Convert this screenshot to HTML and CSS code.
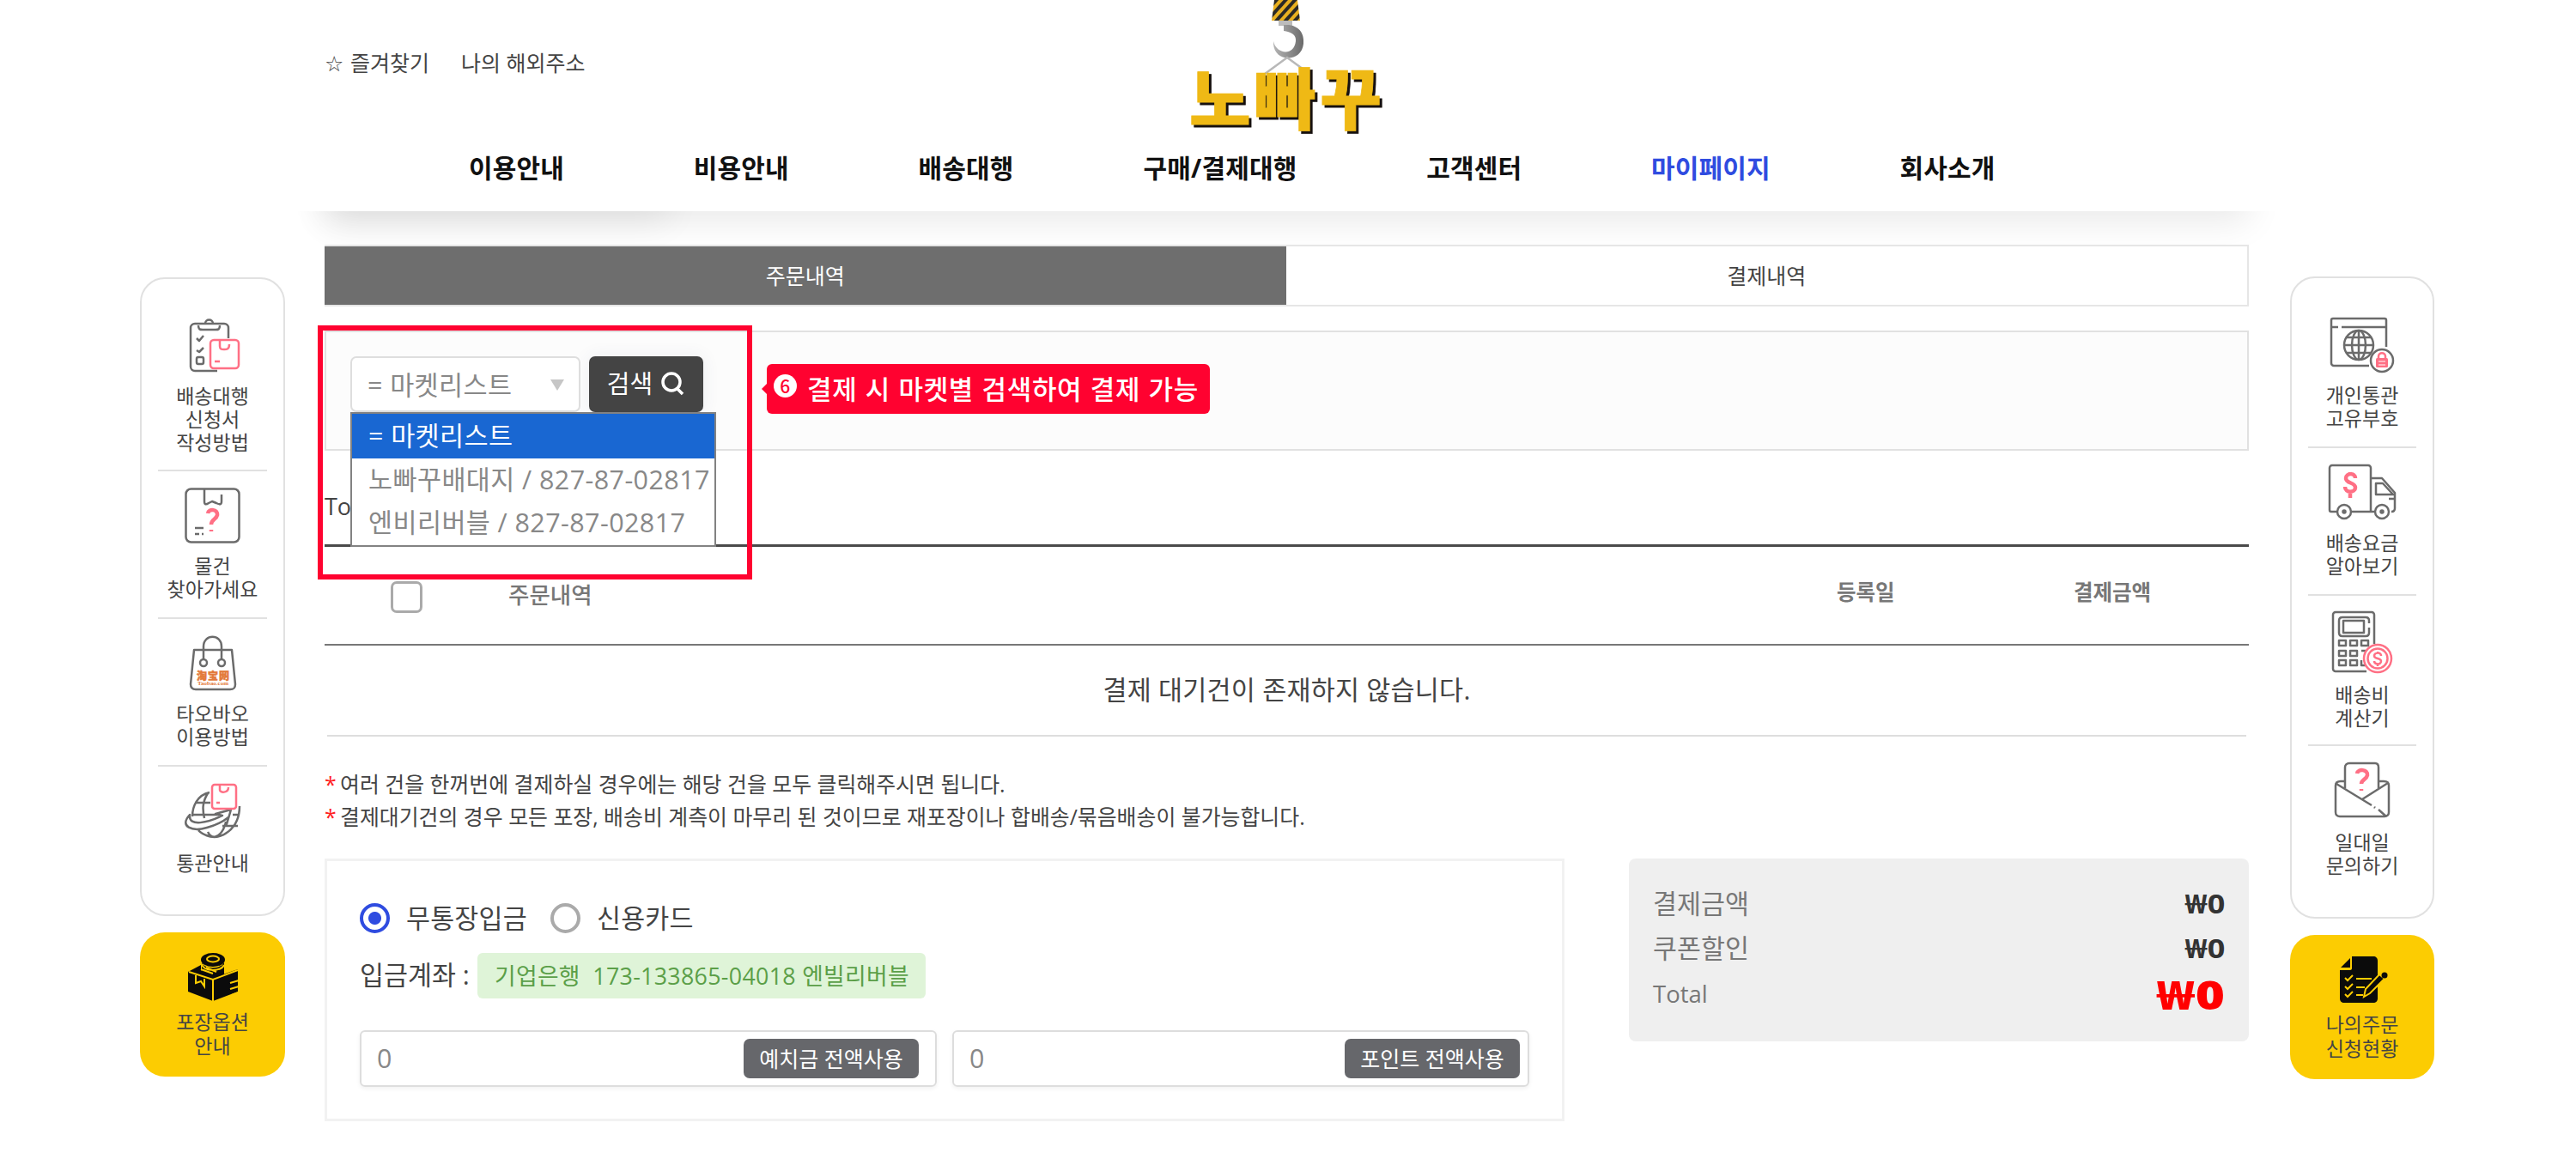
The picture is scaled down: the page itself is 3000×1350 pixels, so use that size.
FILE: index.html
```html
<!DOCTYPE html>
<html lang="ko">
<head>
<meta charset="utf-8">
<title>노빠꾸 - 주문내역</title>
<link rel="stylesheet" href="styles.css">
</head>
<body>
<div class="page">
  <aside class="side side-left">
    <nav class="side-panel">
      <a class="side-item first">
        <svg class="ico" width="76" height="66" viewBox="0 0 76 66"><path d="M43 62H17a5 5 0 0 1-5-5V12a5 5 0 0 1 5-5h34a5 5 0 0 1 5 5v12M29 7c0-6 9-6 9 0M21 9c0 5 2 5 5 5h15c3 0 5 0 5-5M19 24l3 3 5-6M19 38l3 2 5-5"/><rect x="19" y="46" width="8" height="8" rx="2"/><g class="pink"><rect x="35" y="26" width="33" height="33" rx="4"/><path d="M46 27v6c0 4 2 4 5 4s6 0 6-6M40 51h6"/></g></svg>
        <span>배송대행<br>신청서<br>작성방법</span>
      </a>
      <a class="side-item">
        <svg class="ico" width="66" height="66" viewBox="0 0 66 66"><rect x="1.500" y="1.500" width="62" height="62" rx="6"/><path d="M23 2v14c0 4 2 4 5 2l4-2 5 2c4 2 6 2 6-2V8M12 47h10M12 54h5M20 54h2"/><path class="pink bold" d="M27 30c1-6 12-5 11 2-1 5-7 5-7 11M31 49v2"/></svg>
        <span>물건<br>찾아가세요</span>
      </a>
      <a class="side-item">
        <svg class="ico" width="56" height="66" viewBox="0 0 56 66"><path d="M6 17h44l4 40c0 5-2 6-6 6H8c-4 0-6-2-6-6zM17 28V13c0-15 21-15 21 0v15"/><circle class="fill-white" cx="17" cy="32" r="4"/><circle class="fill-white" cx="38" cy="32" r="4"/><text class="taobao-name" x="9" y="52" textLength="38">淘宝网</text><text class="taobao-url" x="10" y="58" textLength="36">Taobao.com</text></svg>
        <span>타오바오<br>이용방법</span>
      </a>
      <a class="side-item last">
        <svg class="ico" width="68" height="66" viewBox="0 0 68 66"><path d="M30 11C16 14 10 27 10 39M26 61c18 7 39-8 39-34M28 12c-7 11-6 20-4 29M13 23h18M10 37h34M57 37h8M45 50h18M28 57c4 8 12 8 18-3 1-3 3-6 3-9M17 55c4 5 9 6 13 7"/><path class="fill-white" d="M7 37c-13 14 3 20 20 15 12-3 20-8 25-12l-2 8 5-17-18 5 8 2C29 46 5 52 7 37z"/><g class="pink fill-white"><rect x="33" y="2" width="28" height="28" rx="3"/><path d="M42 3v5c0 4 10 4 10-3M38 23h4"/></g></svg>
        <span>통관안내</span>
      </a>
    </nav>
    <a class="side-cta">
      <svg class="ico-solid" width="60" height="58" viewBox="0 0 60 58"><path d="M1 23 16 15v6l14 9 29-10v26L30 57 1 46z"/><ellipse cx="30" cy="9" rx="14" ry="8"/><path d="M17 12c2 8 22 9 26 0v16l-12 4-14-10z"/><g class="cut"><ellipse cx="30" cy="8" rx="7" ry="3.500"/><path d="M17 14c2 9 22 9 26 1M30 31v26M2 23l28 9 29-11M10 27v9l6-2 4 6v-9M16 20l14 5M22 18l12 5M50 36l10-3M50 43l10-3M52 50l8-3"/></g></svg>
      <span>포장옵션<br>안내</span>
    </a>
  </aside>

  <main class="main">
    <header class="header">
      <div class="util"><a><span class="star">☆</span>즐겨찾기</a><a>나의 해외주소</a></div>
      <svg class="logo" width="232" height="160" viewBox="0 0 232 160">
        <defs>
          <pattern id="stripe" width="8" height="8" patternUnits="userSpaceOnUse" patternTransform="rotate(42)"><rect width="8" height="8" fill="#e8b020"/><rect width="4" height="8" fill="#2b2a26"/></pattern>
          <linearGradient id="steel"><stop offset="0" stop-color="#b5b5b5"/><stop offset="1" stop-color="#6a6a6a"/></linearGradient>
        </defs>
        <path d="M97 0h27l3 24H94z" fill="url(#stripe)"/>
        <path d="M102 24h16v6h-16z" fill="#bcbcbc"/>
        <path d="M108 29h6c14 2 18 12 17 22-2 22-34 22-35 0v-3c3 15 24 18 26 0 1-8-6-11-14-12z" fill="url(#steel)"/>
        <path d="M82 89 112 67 138 86" fill="none" stroke="#b8b8b8" stroke-width="2.500"/>
        <text class="logo-text logo-shade" x="1" y="148" textLength="224">노빠꾸</text>
        <text class="logo-text" x="-2" y="145" textLength="224">노빠꾸</text>
      </svg>
      <nav class="gnb"><a>이용안내</a><a>비용안내</a><a>배송대행</a><a>구매/결제대행</a><a>고객센터</a><a class="on">마이페이지</a><a>회사소개</a></nav>
    </header>
    <div class="shade"><div class="shade-wide"></div><div class="shade-sub"></div></div>

    <div class="tabs"><a class="tab on">주문내역</a><a class="tab">결제내역</a></div>

    <section class="search">
      <div class="select">= 마켓리스트<i class="arrow"></i>
        <ul class="options"><li class="sel">= 마켓리스트</li><li>노빠꾸배대지 / 827-87-02817</li><li>엔비리버블 / 827-87-02817</li></ul>
      </div>
      <button class="btn-search">검색<svg width="28" height="28" viewBox="0 0 28 28"><circle cx="12" cy="12" r="10"/><path d="m19 20 6 6"/></svg></button>
      <div class="highlight"></div>
      <div class="callout"><span class="num">6</span>결제 시 마켓별 검색하여 결제 가능</div>
    </section>

    <p class="total">Total</p>

    <section class="orders">
      <div class="orders-head"><span class="check"></span><span class="h-order">주문내역</span><span class="h-date">등록일</span><span class="h-price">결제금액</span></div>
      <p class="empty">결제 대기건이 존재하지 않습니다.</p>
    </section>

    <ul class="notes"><li>여러 건을 한꺼번에 결제하실 경우에는 해당 건을 모두 클릭해주시면 됩니다.</li><li>결제대기건의 경우 모든 포장, 배송비 계측이 마무리 된 것이므로 재포장이나 합배송/묶음배송이 불가능합니다.</li></ul>

    <div class="pay">
      <section class="method">
        <div class="radios"><span class="radio on"></span><label>무통장입금</label><span class="radio"></span><label>신용카드</label></div>
        <div class="account"><span>입금계좌 :</span><span class="pill">기업은행&nbsp; 173-133865-04018 엔빌리버블</span></div>
        <div class="fields"><div class="field">0<button>예치금 전액사용</button></div><div class="field point">0<button>포인트 전액사용</button></div></div>
      </section>
      <dl class="summary"><div><dt>결제금액</dt><dd>₩0</dd></div><div><dt>쿠폰할인</dt><dd>₩0</dd></div><div><dt class="latin">Total</dt><dd class="sum">₩0</dd></div></dl>
    </div>
  </main>

  <aside class="side side-right">
    <nav class="side-panel">
      <a class="side-item first">
        <svg class="ico" width="76" height="66" viewBox="0 0 76 66"><path d="M46 57H5a3 3 0 0 1-3-3V4a2 2 0 0 1 2-2h60a2 2 0 0 1 2 2v31M3 12h7M14 12h51"/><circle cx="34" cy="33" r="17"/><ellipse cx="34" cy="33" rx="8" ry="17"/><path d="M34 16v34M17 33h34M20 24h28M20 42h28"/><circle class="fill-white" cx="61" cy="51" r="13"/><path class="pink" d="M57 50v-4c0-5 8-5 8 0v4"/><rect class="pink-solid" x="54" y="48" width="14" height="11" rx="1.500"/><path class="white-line" d="M57 52h8M57 56h8"/></svg>
        <span>개인통관<br>고유부호</span>
      </a>
      <a class="side-item">
        <svg class="ico" width="80" height="66" viewBox="0 0 80 66"><path d="M10 55H4a2 2 0 0 1-2-2V4a3 3 0 0 1 3-3h42a3 3 0 0 1 3 3v51H27M50 16h13l15 17v18c0 3-2 4-4 4M50 55h4M56 22h8l12 13H56zM71 40h7"/><circle cx="19" cy="55" r="8"/><circle class="dot" cx="19" cy="55" r="1.500"/><circle cx="63" cy="55" r="8"/><circle class="dot" cx="63" cy="55" r="1.500"/><path class="pink bold" d="M32 16c0-7-11-6-11 0 0 7 11 4 11 11 0 6-12 7-12-1M26 9v4M26 34v5"/></svg>
        <span>배송요금<br>알아보기</span>
      </a>
      <a class="side-item tall">
        <svg class="ico" width="72" height="72" viewBox="0 0 72 72"><path d="M41 70H5a3 3 0 0 1-3-3V4a3 3 0 0 1 3-3h42a3 3 0 0 1 3 3v34M44 14v-3c0-3-2-4-4-4H13c-3 0-4 2-4 4v14c0 3 2 4 4 4h27c3 0 4-2 4-4v-6M14 11h24v14H14zM9 34h8v6H9zM22 34h8v6h-8zM35 34h8v6h-8zM9 46h8v6H9zM22 46h8v6h-8zM35 46h5M9 57h8v6H9zM22 57h8v6h-8zM35 57v6h6"/><g class="pink"><circle class="fill-white" cx="54" cy="55" r="16"/><circle cx="54" cy="55" r="11.500"/><path d="M58 52c0-5-8-4-8 0 0 4 8 2 8 6 0 5-8 4-8 0M54 47v2M54 61v3"/></g></svg>
        <span>배송비<br>계산기</span>
      </a>
      <a class="side-item last">
        <svg class="ico" width="66" height="66" viewBox="0 0 66 66"><path d="M13 22H8c-4 0-6 2-6 5v31c0 3 2 5 5 5h52c3 0 5-2 5-5V27c0-4-2-5-6-5h-6M13 30V6c0-3 2-5 5-5h30c3 0 4 2 4 5v24M3 25l41 25M47 52l1 1M52 55l9 8M63 24 33 43"/><path class="pink bold" d="M27 13c1-6 13-5 12 2-1 5-7 5-7 10M32 31v2"/></svg>
        <span>일대일<br>문의하기</span>
      </a>
    </nav>
    <a class="side-cta">
      <svg class="ico-solid" width="60" height="58" viewBox="0 0 60 58"><path d="M18 2h25c3 0 5 2 5 5v44c0 3-2 5-5 5H9c-3 0-5-2-5-5V18h11c3 0 3-1 3-3zM5 15 16 4v11z"/><g class="cut"><path d="m10 27 3 3 6-6M10 37l3 3 6-6M10 46l3 3 6-6M23 28h18M23 38h10M23 47h8"/></g><path class="pencil" d="m32 49 2-9 16-17 6 5-17 17z"/><circle cx="56" cy="24" r="3.500"/></svg>
      <span>나의주문<br>신청현황</span>
    </a>
  </aside>
</div>
</body>
</html>
```
FILE: styles.css
```css
* { box-sizing: border-box; }
body {
  margin: 0;
  background: #fff;
  color: #444;
  font-family: "Open Sans", "Noto Sans CJK KR", sans-serif;
  font-size: 25px;
  line-height: 36px;
}
p, ul, dl, dd { margin: 0; padding: 0; list-style: none; }
button { border: 0; font-family: inherit; color: #fff; padding: 0; }
.page {
  display: grid;
  grid-template-columns: 169px 2241px 168px;
  column-gap: 46px;
  padding-left: 163px;
  width: 3000px;
  height: 1350px;
  overflow: hidden;
}

/* side menus */
.side { padding-top: 323px; }
.side-right { padding-top: 322px; margin: 0 -2px 0 2px; }
.side-panel {
  height: 744px;
  padding: 26px 19px 0;
  border: 2px solid #e1e1e1;
  border-radius: 29px;
}
.side-right .side-panel { height: 748px; }
.side-item {
  display: flex;
  flex-direction: column;
  align-items: center;
  gap: 12px;
  height: 172px;
  padding-top: 19px;
  border-bottom: 2px solid #e1e1e1;
  font-size: 23px;
  line-height: 27px;
  text-align: center;
}
.side-left .first { height: 198px; }
.side-right .tall { height: 175px; padding-top: 18px; }
.side-item.last { border: 0; }
.side-left .last { gap: 14px; }
.side-right .last { gap: 14px; }
.side-cta {
  display: flex;
  flex-direction: column;
  align-items: center;
  gap: 10px;
  height: 168px;
  margin-top: 19px;
  padding-top: 23px;
  border-radius: 29px;
  background: #fccc02;
  font-size: 23px;
  line-height: 27.500px;
  text-align: center;
}
svg { flex: none; overflow: visible; }
.ico { fill: none; stroke: #6b6b6b; stroke-width: 2.500; stroke-linejoin: round; }
.ico .fill-white { fill: #fff; }
.ico .pink { stroke: #ff7085; }
.ico .bold { stroke-width: 4.500; }
.ico .pink-solid { fill: #ff7085; stroke: none; }
.ico .white-line { stroke: #fff; stroke-width: 1; }
.ico .dot { fill: #6b6b6b; }
.taobao-name { fill: #e37a3a; stroke: #e37a3a; stroke-width: .5; font: 900 12px "Noto Sans CJK SC", sans-serif; }
.taobao-url { fill: #e37a3a; stroke: none; font: 700 7px "Liberation Serif", serif; }
.ico-solid { fill: #0b0b0b; }
.cut { fill: none; stroke: #fccc02; stroke-width: 2; }
.pencil { stroke: #fccc02; stroke-width: 2; }

/* header */
.header {
  position: relative;
  height: 246px;
  background: #fff;
}
.util { display: flex; gap: 37px; padding: 55px 0 0; }
.star { display: inline-block; width: 30px; font: 700 25px/20px "DejaVu Sans", sans-serif; }
.logo { position: absolute; left: 1009px; top: 0; }
.logo-text {
  fill: #efb915;
  stroke: #efb915;
  stroke-width: .8;
  font: 900 78px "Noto Sans CJK KR", sans-serif;
}
.logo-shade { fill: #17110f; stroke: #17110f; }
.gnb {
  display: flex;
  gap: 150.800px;
  padding: 87px 0 0 168px;
  font-size: 30px;
  font-weight: 700;
  letter-spacing: .15px;
  color: #111;
}
.gnb .on { color: #2f4ce0; }
.shade {
  position: relative;
  height: 38.500px;
  margin: 0 -32px;
  overflow: hidden;
}
.shade-wide, .shade-sub { position: absolute; top: -100px; left: 32px; height: 100px; }
.shade-wide { right: 32px; box-shadow: 0 12px 42px rgba(0, 0, 0, .09); }
.shade-sub { width: 400px; box-shadow: 0 12px 42px rgba(0, 0, 0, .07); }

.tabs {
  position: relative;
  display: flex;
  height: 72px;
  border: 2px solid #e6e6e6;
  border-left: 0;
  background: #fff;
}
.tab {
  flex: 1;
  display: flex;
  align-items: center;
  justify-content: center;
}
.tab.on { background: #6e6e6e; color: #fff; }

/* market search */
.search {
  position: relative;
  display: flex;
  gap: 10px;
  height: 140px;
  margin-top: 28px;
  padding: 28px 28px 0;
  border: 2px solid #e1e1e1;
  background: #fcfcfc;
}
.select {
  position: relative;
  width: 268px;
  height: 65px;
  padding-left: 18px;
  border: 2px solid #dedede;
  border-radius: 7px;
  background: #fff;
  color: #888;
  font-size: 30.500px;
  letter-spacing: .4px;
  line-height: 62px;
}
.arrow {
  position: absolute;
  right: 17px;
  top: 25px;
  border: 8px solid transparent;
  border-top: 13px solid #c6c6c6;
  border-bottom: 0;
}
.options {
  position: absolute;
  z-index: 1;
  left: -2px;
  top: 63px;
  width: 426px;
  height: 157px;
  border: 2px solid #828282;
  background: #fff;
  line-height: 49px;
  white-space: nowrap;
}
.options li { height: 50.500px; padding-left: 19px; }
.options .sel { background: #1967d2; color: #fff; height: 52px; line-height: 50px; }
.btn-search {
  display: flex;
  align-items: center;
  justify-content: center;
  gap: 10px;
  width: 133px;
  height: 65px;
  border-radius: 7px;
  background: #444;
  box-shadow: 0 0 20px rgba(60, 80, 110, .08);
  font-size: 29px;
  line-height: 60px;
}
.btn-search svg { fill: none; stroke: #fff; stroke-width: 3.500; }
.highlight {
  position: absolute;
  z-index: 2;
  left: -10px;
  top: -8px;
  width: 506px;
  height: 296px;
  border: 6px solid #ff0230;
}
.callout {
  position: absolute;
  left: 513px;
  top: 37px;
  display: flex;
  align-items: center;
  gap: 12px;
  width: 516px;
  height: 58px;
  padding: 0 0 1px 8px;
  border-radius: 6px;
  background: #ff0230;
  color: #fff;
  font-family: "Noto Sans CJK KR", sans-serif;
  font-size: 31px;
  font-weight: 500;
  letter-spacing: .7px;
  white-space: nowrap;
}
.callout::before {
  content: "";
  position: absolute;
  left: -6px;
  top: 23px;
  border: 6px solid transparent;
  border-right-color: #ff0230;
  border-left: 0;
}
.num {
  width: 27px;
  height: 27px;
  margin-top: -5px;
  border-radius: 50%;
  background: #fff;
  color: #ff0230;
  font-size: 21px;
  line-height: 26px;
  text-align: center;
}
.total { padding-top: 47px; height: 109px; font-size: 27px; }

/* order list */
.orders { border-top: 3px solid #4a4a4a; }
.orders-head {
  display: flex;
  align-items: center;
  height: 115px;
  padding: 0 0 0 77px;
  border-bottom: 2px solid #777;
  color: #777;
}
.check { width: 37px; height: 37px; margin-top: 4px; border: 3px solid #aaa; border-radius: 7px; }
.h-order { width: 1547px; margin-left: 100px; font-size: 26.500px; font-weight: 500; }
.h-date { width: 276px; margin-top: -7px; font-size: 24.500px; font-weight: 700; }
.h-price { margin-top: -7px; font-size: 24.500px; font-weight: 700; }
.empty {
  height: 106px;
  margin: 0 3px;
  border-bottom: 2px solid #dedede;
  font-size: 30.500px;
  letter-spacing: .2px;
  line-height: 103px;
  text-align: center;
}
.notes { padding-top: 36px; font-size: 24.900px; line-height: 38px; }
.notes li { display: flex; }
.notes li::before { content: "*"; width: 18px; color: #ff2222; }

/* payment */
.pay { display: flex; justify-content: space-between; padding-top: 30px; }
.method {
  width: 1444px;
  height: 306px;
  padding: 47px 38px 0;
  border: 3px solid #f2f2f2;
  font-size: 30.400px;
}
.radios { display: flex; align-items: center; height: 40px; }
.radio { width: 35px; height: 35px; margin-right: 19px; border: 4px solid #aaa; border-radius: 50%; }
.radio.on { border-color: #2f4ce0; background: radial-gradient(circle, #2f4ce0 7px, #fff 8px); }
.radios label { width: 168px; letter-spacing: .2px; }
.account { display: flex; align-items: center; height: 53px; margin-top: 20px; line-height: 51px; }
.account > :first-child { width: 137px; height: 53px; }
.pill {
  width: 522px;
  height: 53px;
  padding-left: 20px;
  border-radius: 6px;
  background: #dff4d8;
  color: #5b9f48;
  font-size: 26.800px;
  letter-spacing: .3px;
  line-height: 53px;
  white-space: nowrap;
}
.fields { display: flex; gap: 18px; margin-top: 37px; }
.field {
  display: flex;
  align-items: center;
  justify-content: space-between;
  width: 672px;
  height: 66px;
  padding: 0 19px 0 18px;
  border: 2px solid #ddd;
  border-radius: 6px;
  box-shadow: 0 2px 5px rgba(0, 0, 0, .06);
  color: #888;
}
.field.point { padding-right: 9px; }
.field button { width: 204px; height: 46px; border-radius: 7px; background: #66676b; font-size: 25px; line-height: 44px; }
.summary {
  width: 722px;
  height: 213px;
  padding: 27px 28px;
  border-radius: 8px;
  background: #efefef;
  color: #777;
}
.summary div { display: flex; justify-content: space-between; height: 52.500px; line-height: 52px; font-size: 30.400px; }
.summary dt.latin { font-size: 27.500px; }
.summary dd { color: #333; font: 700 30px/52px "Noto Sans", sans-serif; transform: scaleX(1.2); transform-origin: right; }
.summary dd.sum { color: #f00; font-size: 46px; font-weight: 900; transform: scaleX(1.27); }
```
